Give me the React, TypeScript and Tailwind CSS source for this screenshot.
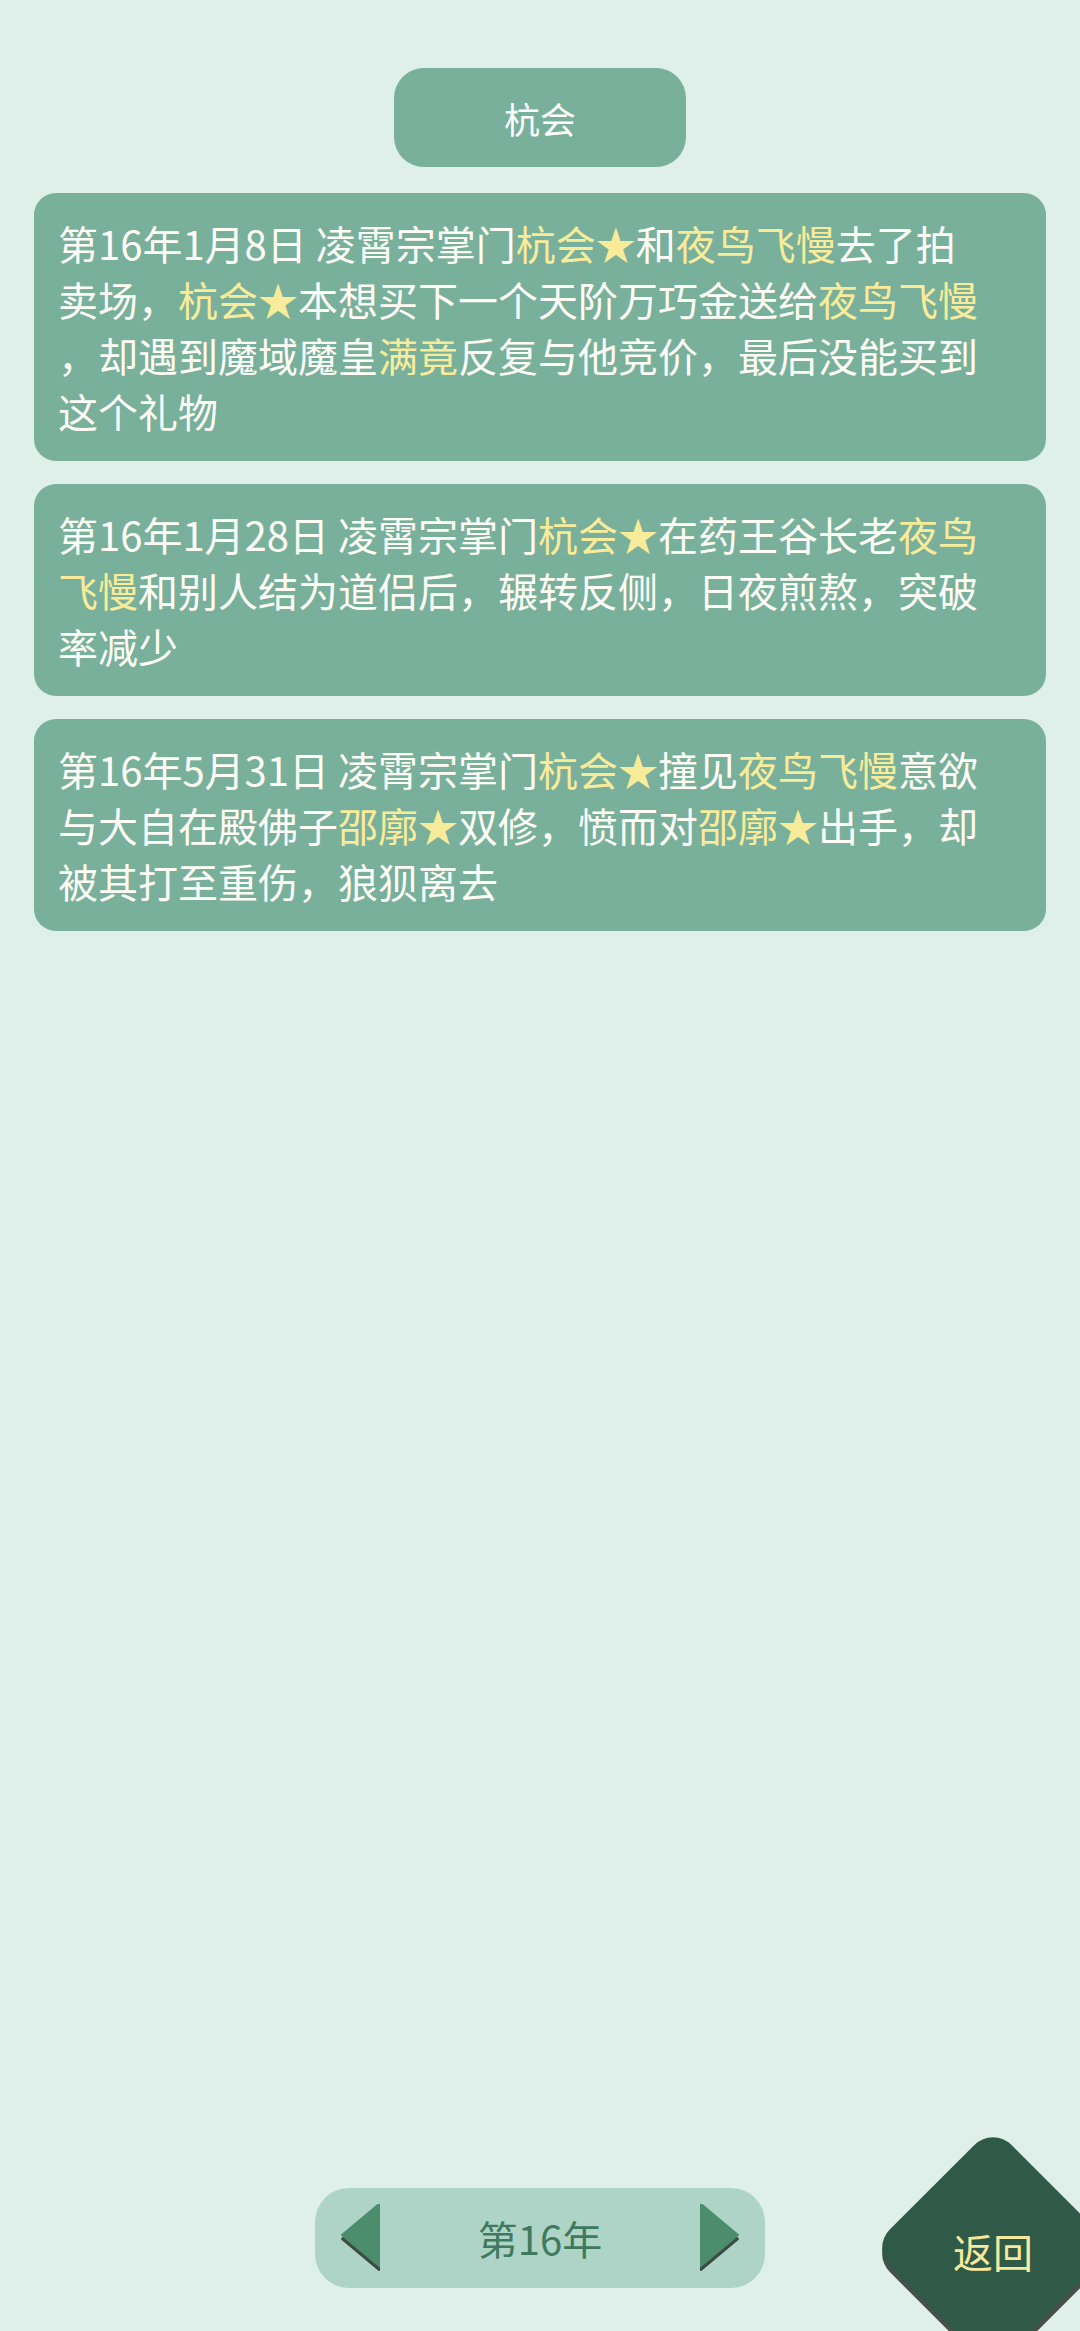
import React from "react";

type Seg = { t: string; hl?: boolean };

const events: Seg[][] = [
  [
    { t: "第16年1月8日 凌霄宗掌门" },
    { t: "杭会★", hl: true },
    { t: "和" },
    { t: "夜鸟飞慢", hl: true },
    { t: "去了拍卖场，" },
    { t: "杭会★", hl: true },
    { t: "本想买下一个天阶万巧金送给" },
    { t: "夜鸟飞慢", hl: true },
    { t: "，却遇到魔域魔皇" },
    { t: "满竟", hl: true },
    { t: "反复与他竞价，最后没能买到这个礼物" },
  ],
  [
    { t: "第16年1月28日 凌霄宗掌门" },
    { t: "杭会★", hl: true },
    { t: "在药王谷长老" },
    { t: "夜鸟飞慢", hl: true },
    { t: "和别人结为道侣后，辗转反侧，日夜煎熬，突破率减少" },
  ],
  [
    { t: "第16年5月31日 凌霄宗掌门" },
    { t: "杭会★", hl: true },
    { t: "撞见" },
    { t: "夜鸟飞慢", hl: true },
    { t: "意欲与大自在殿佛子" },
    { t: "邵廓★", hl: true },
    { t: "双修，愤而对" },
    { t: "邵廓★", hl: true },
    { t: "出手，却被其打至重伤，狼狈离去" },
  ],
];

function Arrow({ dir }: { dir: "left" | "right" }) {
  const pts = dir === "left" ? "38,0 38,62 1,31" : "2,0 2,62 39,31";
  const shadow = dir === "left" ? "38,4 38,66 1,35" : "2,4 2,66 39,35";
  return (
    <svg width="40" height="68" viewBox="0 0 40 68">
      <polygon points={shadow} fill="#3d4a44" strokeLinejoin="round" stroke="#3d4a44" strokeWidth="2" />
      <polygon points={pts} fill="#4c8d6e" strokeLinejoin="round" stroke="#4c8d6e" strokeWidth="2" />
    </svg>
  );
}

export default function App() {
  return (
    <div
      className="relative w-[1080px] h-[2331px] overflow-hidden bg-[#dff0ea] flex flex-col"
      style={{ fontFamily: '"Noto Sans CJK SC", "Noto Sans", sans-serif' }}
    >
      <div className="flex justify-center mt-[68px]">
        <div className="w-[292px] h-[99px] rounded-[30px] bg-[#79b09b] flex items-center justify-center text-[36px] text-white">
          杭会
        </div>
      </div>

      <div className="flex flex-col gap-[23px] mt-[26px] px-[34px]">
        {events.map((segs, i) => (
          <div
            key={i}
            className="rounded-[22px] bg-[#79b09b] pl-[24px] pr-[56px] py-[22px] text-[40px] leading-[56px] text-[#fdfdf6] [line-break:anywhere]"
          >
            {segs.map((s, j) => (
              <span key={j} className={s.hl ? "text-[#f8ec9a]" : ""}>
                {s.t}
              </span>
            ))}
          </div>
        ))}
      </div>

      <div className="flex-1" />

      <div className="flex justify-center mb-[43px]">
        <div className="w-[450px] h-[100px] rounded-[34px] bg-[#aed4c8] flex items-center justify-between px-[26px]">
          <Arrow dir="left" />
          <span className="text-[40px] text-[#3f7a5e]">第16年</span>
          <Arrow dir="right" />
        </div>
      </div>

      <div className="absolute left-[907px] top-[2162px] w-[172px] h-[172px] rotate-45 rounded-[26px] bg-[#2f5a47] shadow-[4px_4px_0_#4a4f4c]" />
      <div className="absolute left-[907px] top-[2162px] w-[172px] h-[172px] flex items-center justify-center text-[40px] text-[#f6e89c] pt-[6px]">
        返回
      </div>
    </div>
  );
}
